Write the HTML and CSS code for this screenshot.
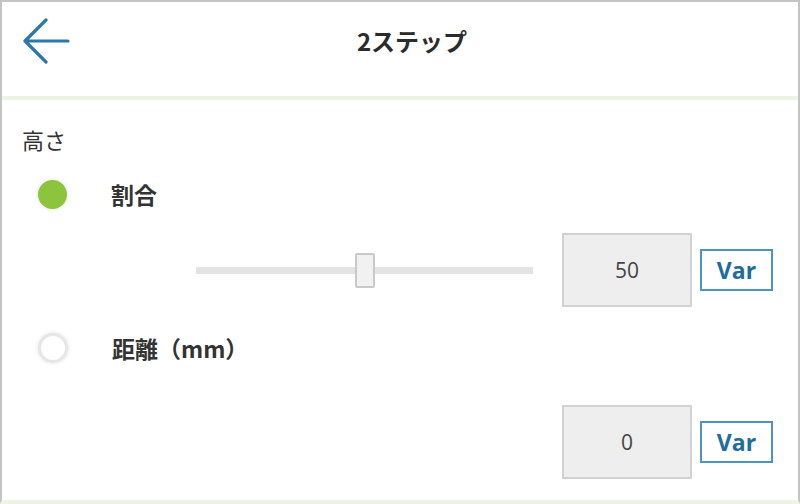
FILE: index.html
```html
<!DOCTYPE html>
<html lang="ja">
<head>
  <meta charset="UTF-8">
  <meta name="viewport" content="width=device-width, initial-scale=1.0">
  <title>2ステップ</title>
  <link rel="stylesheet" href="styles.css">
</head>
<body>
  <div id="screen">
    <div class="header">
      <svg class="back" width="48" height="46" viewBox="0 0 48 46">
        <path d="M24 2 L3 23 L24 44 M3 23 L46 23" fill="none" stroke="#2b79aa" stroke-width="3.2" stroke-linecap="round" stroke-linejoin="round"/>
      </svg>
      <h1>2ステップ</h1>
    </div>
    <div class="content">
      <p class="section-label">高さ</p>

      <div class="radio-row">
        <span class="radio checked"></span>
        <span class="radio-label">割合</span>
      </div>

      <div class="value-row">
        <div class="slider">
          <div class="track"></div>
          <div class="thumb"></div>
        </div>
        <div class="value-box">50</div>
        <button class="var-button">Var</button>
      </div>

      <div class="radio-row second">
        <span class="radio"></span>
        <span class="radio-label">距離（mm）</span>
      </div>

      <div class="value-row last">
        <div class="value-box">0</div>
        <button class="var-button">Var</button>
      </div>
    </div>
  </div>
</body>
</html>
```

FILE: styles.css
```css
body {
  margin: 0;
  padding: 0;
  background-color: #ffffff;
  font-family: "Noto Sans CJK JP", "Noto Sans", sans-serif;
  color: #333;
}

#screen {
  width: 800px;
  height: 504px;
  box-sizing: border-box;
  border-top: 2px solid #c4c4c4;
  border-left: 2px solid #c4c4c4;
  border-right: 2px solid #c4c4c4;
  border-bottom: 4px solid #eef4e2;
  overflow: hidden;
}

.header {
  height: 94px;
  border-bottom: 4px solid #eef4e2;
  display: flex;
  align-items: center;
  position: relative;
}

.back {
  margin-left: 20px;
  margin-top: -16px;
}

h1 {
  position: absolute;
  left: 0;
  right: 0;
  top: 19px;
  margin: 0;
  text-align: center;
  font-size: 24px;
  font-weight: bold;
  color: #2b2b2b;
  line-height: 40px;
  padding-left: 24px;
}

.content {
  padding-left: 20px;
}

.section-label {
  margin: 24px 0 0 0;
  font-size: 22px;
  line-height: 30px;
  color: #333;
}

.radio-row {
  display: flex;
  align-items: center;
  height: 50px;
  margin-top: 15px;
}

.radio-row.second {
  margin-top: 16px;
}

.radio {
  width: 24px;
  height: 24px;
  border-radius: 50%;
  margin-left: 16px;
  border: 3px solid #e6e6e6;
  background-color: #fff;
  box-shadow: 0 0 4px rgba(0, 0, 0, 0.12);
}

.radio.checked {
  border: none;
  width: 29px;
  height: 29px;
  background-color: #8cc43e;
  box-shadow: 0 0 5px rgba(0, 0, 0, 0.1);
}

.radio-label {
  margin-left: 44px;
  font-size: 23px;
  font-weight: bold;
  color: #333;
}

.value-row {
  display: flex;
  align-items: center;
  justify-content: flex-end;
  padding-right: 25px;
  margin-top: 14px;
}

.value-row.last {
  margin-top: 32px;
}

.slider {
  position: relative;
  width: 337px;
  height: 36px;
  margin-right: 29px;
}

.track {
  position: absolute;
  left: 0;
  right: 0;
  top: 15px;
  height: 7px;
  background-color: #e3e3e3;
}

.thumb {
  position: absolute;
  left: 159px;
  top: 1px;
  width: 16px;
  height: 31px;
  border: 2px solid #c9c9c9;
  border-radius: 2px;
  background-color: #f1f1f1;
}

.value-box {
  width: 126px;
  height: 70px;
  border: 2px solid #d2d2d2;
  background-color: #eeeeee;
  display: flex;
  align-items: center;
  justify-content: center;
  font-family: "Open Sans", "Noto Sans", sans-serif;
  font-size: 21px;
  color: #444;
}

.var-button {
  margin-left: 8px;
  width: 73px;
  height: 42px;
  border: 2px solid #4d95bf;
  background-color: #fff;
  color: #1e6d9b;
  font-family: "Open Sans", "Noto Sans", sans-serif;
  font-size: 23px;
  font-weight: bold;
  padding: 0;
}
```
